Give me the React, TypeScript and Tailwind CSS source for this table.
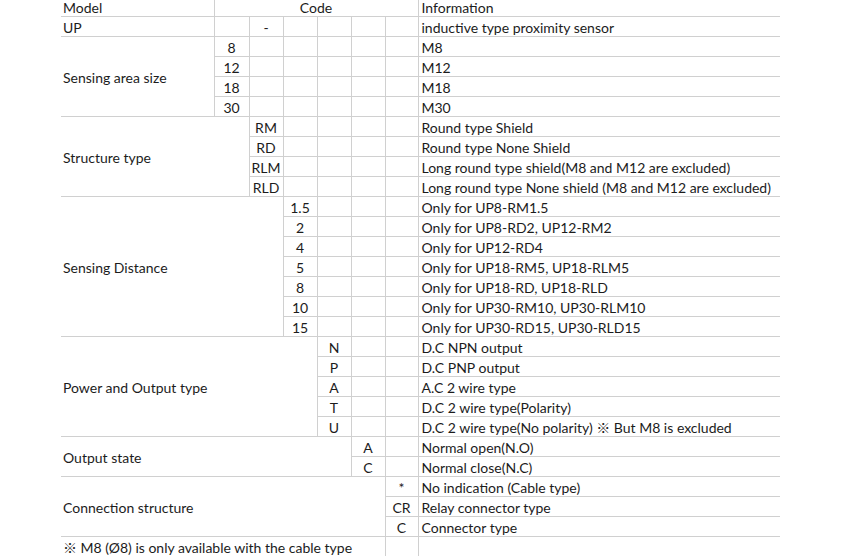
import React from "react";

type Group = {
  label: string;
  codeCol: number;
  rows: [string, string][];
};

const groups: Group[] = [
  {
    label: "Sensing area size",
    codeCol: 1,
    rows: [
      ["8", "M8"],
      ["12", "M12"],
      ["18", "M18"],
      ["30", "M30"],
    ],
  },
  {
    label: "Structure type",
    codeCol: 2,
    rows: [
      ["RM", "Round type Shield"],
      ["RD", "Round type None Shield"],
      ["RLM", "Long round type shield(M8 and M12 are excluded)"],
      ["RLD", "Long round type None shield (M8 and M12 are excluded)"],
    ],
  },
  {
    label: "Sensing Distance",
    codeCol: 3,
    rows: [
      ["1.5", "Only for UP8-RM1.5"],
      ["2", "Only for UP8-RD2, UP12-RM2"],
      ["4", "Only for UP12-RD4"],
      ["5", "Only for UP18-RM5, UP18-RLM5"],
      ["8", "Only for UP18-RD, UP18-RLD"],
      ["10", "Only for UP30-RM10, UP30-RLM10"],
      ["15", "Only for UP30-RD15, UP30-RLD15"],
    ],
  },
  {
    label: "Power and Output type",
    codeCol: 4,
    rows: [
      ["N", "D.C NPN output"],
      ["P", "D.C PNP output"],
      ["A", "A.C 2 wire type"],
      ["T", "D.C 2 wire type(Polarity)"],
      ["U", "D.C 2 wire type(No polarity) \u203B But M8 is excluded"],
    ],
  },
  {
    label: "Output state",
    codeCol: 5,
    rows: [
      ["A", "Normal open(N.O)"],
      ["C", "Normal close(N.C)"],
    ],
  },
  {
    label: "Connection structure",
    codeCol: 6,
    rows: [
      ["*", "No indication (Cable type)"],
      ["CR", "Relay connector type"],
      ["C", "Connector type"],
    ],
  },
];

const line = "border-[#d0d0d0]";
const cell = `h-[19px] p-0 pt-[2px] leading-[17px] align-middle whitespace-nowrap border-b ${line}`;
const codeCell = `${cell} border-l text-center`;
const infoCell = `${cell} border-l pl-[3px] text-left`;
const labelCell = `${cell} pl-[2px] text-left`;

function Empties({ n }: { n: number }) {
  return (
    <>
      {Array.from({ length: n }).map((_, i) => (
        <td key={i} className={codeCell} />
      ))}
    </>
  );
}

export default function App() {
  return (
    <div className="bg-white min-h-[557px] w-[850px] overflow-hidden">
      <div className="pl-[61px] -mt-[3px]">
        <table
          className="table-fixed border-collapse text-[14px] text-[#1c1c1c]"
          style={{ fontFamily: '"Lato", "Noto Sans CJK JP", sans-serif' }}
        >
          <colgroup>
            <col className="w-[153px]" />
            <col className="w-[35px]" />
            <col className="w-[34px]" />
            <col className="w-[34px]" />
            <col className="w-[34px]" />
            <col className="w-[34px]" />
            <col className="w-[33px]" />
            <col className="w-[362px]" />
          </colgroup>
          <tbody>
            <tr>
              <td className={labelCell}>Model</td>
              <td colSpan={6} className={codeCell}>
                Code
              </td>
              <td className={infoCell}>Information</td>
            </tr>
            <tr>
              <td className={labelCell}>UP</td>
              <td className={codeCell} />
              <td className={codeCell}>-</td>
              <Empties n={4} />
              <td className={infoCell}>inductive type proximity sensor</td>
            </tr>
            {groups.map((g) =>
              g.rows.map(([code, info], i) => (
                <tr key={g.label + i}>
                  {i === 0 && (
                    <td rowSpan={g.rows.length} colSpan={g.codeCol} className={labelCell}>
                      {g.label}
                    </td>
                  )}
                  <td className={codeCell}>{code}</td>
                  <Empties n={6 - g.codeCol} />
                  <td className={infoCell}>{info}</td>
                </tr>
              ))
            )}
            <tr>
              <td colSpan={6} className={`${labelCell} border-b-0`}>
                {"\u203B"} M8 ({"\u00D8"}8) is only available with the cable type
              </td>
              <td className={`${codeCell} border-b-0`} />
              <td className={`${infoCell} border-b-0`} />
            </tr>
          </tbody>
        </table>
      </div>
    </div>
  );
}
